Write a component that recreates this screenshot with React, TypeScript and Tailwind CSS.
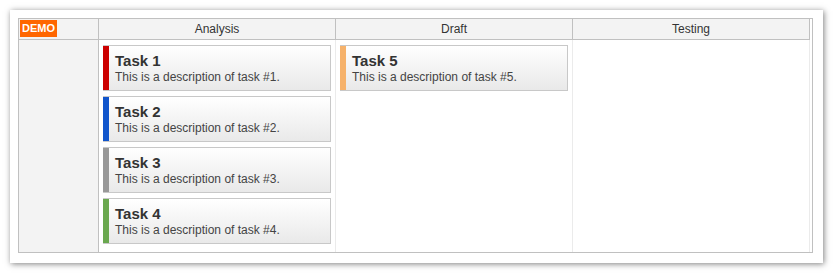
import React from 'react'

type Task = { id: number; color: string }

const columns: { name: string; tasks: Task[] }[] = [
  {
    name: 'Analysis',
    tasks: [
      { id: 1, color: 'bg-[#cc0000]' },
      { id: 2, color: 'bg-[#1155cc]' },
      { id: 3, color: 'bg-[#999999]' },
      { id: 4, color: 'bg-[#6aa84f]' },
    ],
  },
  { name: 'Draft', tasks: [{ id: 5, color: 'bg-[#f6b26b]' }] },
  { name: 'Testing', tasks: [] },
]

const Card = ({ task }: { task: Task }) => (
  <div className='flex h-[46px] border border-l-0 border-[#c8c8c8] bg-gradient-to-b from-white to-[#e9e9e9]'>
    <div className={`w-[6px] shrink-0 ${task.color}`}></div>
    <div className='pl-[6px] pt-[7px] leading-none'>
      <div className='text-[15px] font-bold text-[#333]'>Task {task.id}</div>
      <div className='mt-[3px] text-[12px] text-[#444]'>This is a description of task #{task.id}.</div>
    </div>
  </div>
)

export default function App() {
  return (
    <div className='h-[274px] w-[834px] bg-white pl-[10px] pt-[10px]' style={{ fontFamily: '"Liberation Sans", Arial, sans-serif' }}>
      <div className='h-[253px] w-[813px] bg-white pl-[8px] pt-[8px] shadow-[1px_1px_6px_rgba(0,0,0,0.5)]'>
        <div className='flex h-[235px] w-[795px] flex-col border border-[#c0c0c0] pr-[2px]'>
          {/* header */}
          <div className='flex h-[21px] border-b border-[#c0c0c0] bg-[#f3f3f3]'>
            <div className='flex w-[80px] shrink-0 items-start border-r border-[#c0c0c0] pl-[1px] pt-[1px]'>
              <div className='h-[17px] bg-[#ff6600] px-[2px] text-[11px] font-bold leading-[17px] text-white'>DEMO</div>
            </div>
            {columns.map((c) => (
              <div key={c.name} className='flex w-[237px] shrink-0 items-center justify-center border-r border-[#c0c0c0] text-[12px] text-[#333]'>
                {c.name}
              </div>
            ))}
          </div>

          {/* body */}
          <div className='flex flex-1'>
            <div className='w-[80px] shrink-0 border-r border-[#c0c0c0] bg-[#f3f3f3]'></div>
            {columns.map((c) => (
              <div key={c.name} className='flex w-[237px] shrink-0 flex-col gap-[5px] border-r border-[#ebebeb] px-[4px] pt-[5px]'>
                {c.tasks.map((t) => (
                  <Card key={t.id} task={t} />
                ))}
              </div>
            ))}
          </div>
        </div>
      </div>
    </div>
  )
}
